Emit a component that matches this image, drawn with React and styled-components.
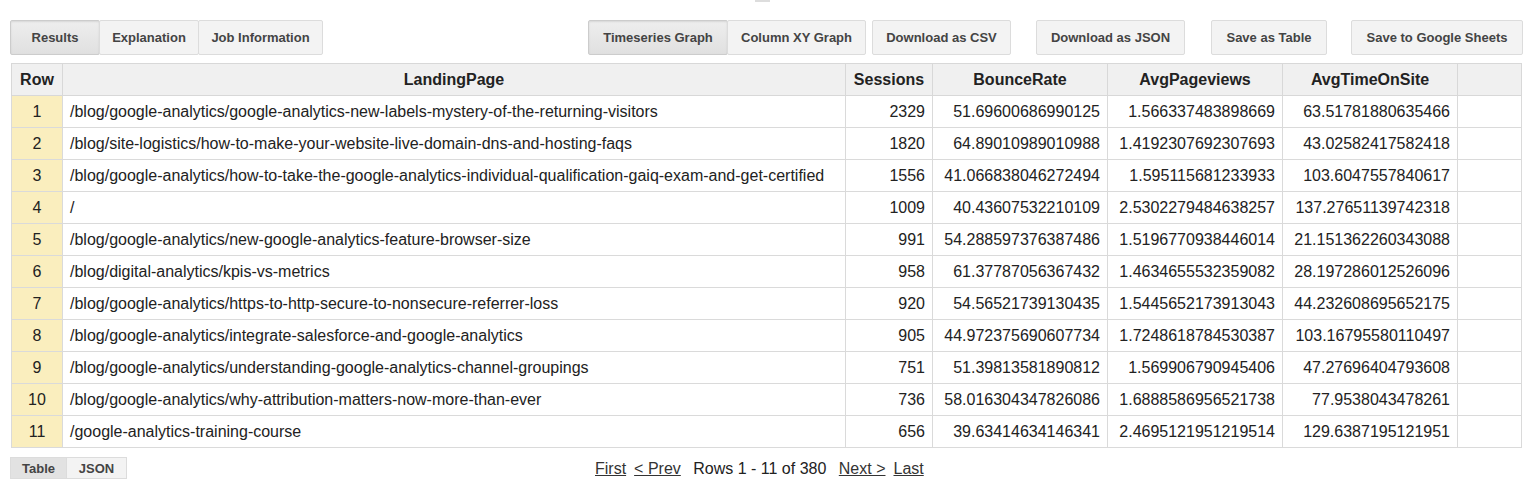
import React from "react";
import styled, { createGlobalStyle } from "styled-components";

const G = createGlobalStyle`
  body { margin: 0; font-family: "Liberation Sans", Arial, sans-serif; background: #fff; color: #222; }
`;
const Page = styled.div`padding: 0 7px 0 11px; position: relative;`;
const Mark = styled.div`position:absolute; left:755px; top:0; width:15px; height:2px; background:#ddd;`;
const Toolbar = styled.div`display:flex; align-items:center; height:35px; padding-top:20px; margin-bottom:8px;`;
const Group = styled.div`display:flex; margin-left:${p => p.ml || 0}px;`;
const Btn = styled.div`
  width:${p => p.w}px; height:35px; box-sizing:border-box; display:flex; align-items:center; justify-content:center;
  font-size:13px; font-weight:bold; color:#444; border:1px solid #dcdcdc; margin-left:-1px;
  background:${p => p.active ? "linear-gradient(#eee,#e0e0e0)" : "#f3f3f3"};
  border-radius:2px;
  ${p => p.active ? "box-shadow: inset 0 1px 2px rgba(0,0,0,0.1); border-color:#ccc;" : ""}
`;
const Table = styled.table`border-collapse:collapse; table-layout:fixed; width:1511px; font-size:16px;`;
const Th = styled.th`height:31px; background:#f0f0f0; border:1px solid #d8d8d8; font-weight:bold; color:#222; padding:0;`;
const Td = styled.td`
  height:31px; border:1px solid #dadada; padding:0 7px; white-space:nowrap; overflow:hidden; color:#222;
  text-align:${p => p.align || "left"};
  ${p => p.num ? "background:#faeebe; text-align:center;" : ""}
`;
const Footer = styled.div`display:flex; align-items:center; margin-top:9px; position:relative; height:22px;`;
const Small = styled.div`
  width:${p => p.w}px; height:22px; box-sizing:border-box; display:flex; align-items:center; justify-content:center;
  font-size:13px; font-weight:bold; color:#444; border:1px solid #dcdcdc; margin-left:-1px;
  background:${p => p.active ? "#e2e2e2" : "#f3f3f3"};
`;
const Pager = styled.div`position:absolute; left:584px; top:3px; font-size:16px; color:#222; display:flex; gap:8px;`;
const L = styled.a`text-decoration:underline; color:#333;`;

const rows = [
 ["/blog/google-analytics/google-analytics-new-labels-mystery-of-the-returning-visitors","2329","51.69600686990125","1.566337483898669","63.51781880635466"],
 ["/blog/site-logistics/how-to-make-your-website-live-domain-dns-and-hosting-faqs","1820","64.89010989010988","1.4192307692307693","43.02582417582418"],
 ["/blog/google-analytics/how-to-take-the-google-analytics-individual-qualification-gaiq-exam-and-get-certified","1556","41.066838046272494","1.595115681233933","103.6047557840617"],
 ["/","1009","40.43607532210109","2.5302279484638257","137.27651139742318"],
 ["/blog/google-analytics/new-google-analytics-feature-browser-size","991","54.288597376387486","1.5196770938446014","21.151362260343088"],
 ["/blog/digital-analytics/kpis-vs-metrics","958","61.37787056367432","1.4634655532359082","28.197286012526096"],
 ["/blog/google-analytics/https-to-http-secure-to-nonsecure-referrer-loss","920","54.56521739130435","1.5445652173913043","44.232608695652175"],
 ["/blog/google-analytics/integrate-salesforce-and-google-analytics","905","44.972375690607734","1.7248618784530387","103.16795580110497"],
 ["/blog/google-analytics/understanding-google-analytics-channel-groupings","751","51.39813581890812","1.569906790945406","47.27696404793608"],
 ["/blog/google-analytics/why-attribution-matters-now-more-than-ever","736","58.016304347826086","1.6888586956521738","77.9538043478261"],
 ["/google-analytics-training-course","656","39.63414634146341","2.4695121951219514","129.6387195121951"],
];

export default function App() {
  return (
    <Page>
      <G />
      <Mark />
      <Toolbar>
        <Group><Btn w={90} active>Results</Btn><Btn w={100}>Explanation</Btn><Btn w={125}>Job Information</Btn></Group>
        <Group ml={266}><Btn w={140} active>Timeseries Graph</Btn><Btn w={139}>Column XY Graph</Btn></Group>
        <Group ml={7}><Btn w={139}>Download as CSV</Btn></Group>
        <Group ml={26}><Btn w={149}>Download as JSON</Btn></Group>
        <Group ml={27}><Btn w={116}>Save as Table</Btn></Group>
        <Group ml={25}><Btn w={172}>Save to Google Sheets</Btn></Group>
      </Toolbar>
      <Table>
        <colgroup>
          <col style={{width:51}}/><col style={{width:783}}/><col style={{width:87}}/><col style={{width:175}}/><col style={{width:175}}/><col style={{width:175}}/><col style={{width:64}}/>
        </colgroup>
        <thead><tr><Th>Row</Th><Th>LandingPage</Th><Th>Sessions</Th><Th>BounceRate</Th><Th>AvgPageviews</Th><Th>AvgTimeOnSite</Th><Th></Th></tr></thead>
        <tbody>
          {rows.map((r, i) => (
            <tr key={i}>
              <Td num>{i + 1}</Td><Td>{r[0]}</Td>
              <Td align="right">{r[1]}</Td><Td align="right">{r[2]}</Td><Td align="right">{r[3]}</Td><Td align="right">{r[4]}</Td><Td></Td>
            </tr>
          ))}
        </tbody>
      </Table>
      <Footer>
        <Small w={57} active>Table</Small><Small w={61}>JSON</Small>
        <Pager><L>First</L><L>&lt; Prev</L><span>&nbsp;Rows 1 - 11 of 380&nbsp;</span><L>Next &gt;</L><L>Last</L></Pager>
      </Footer>
    </Page>
  );
}
